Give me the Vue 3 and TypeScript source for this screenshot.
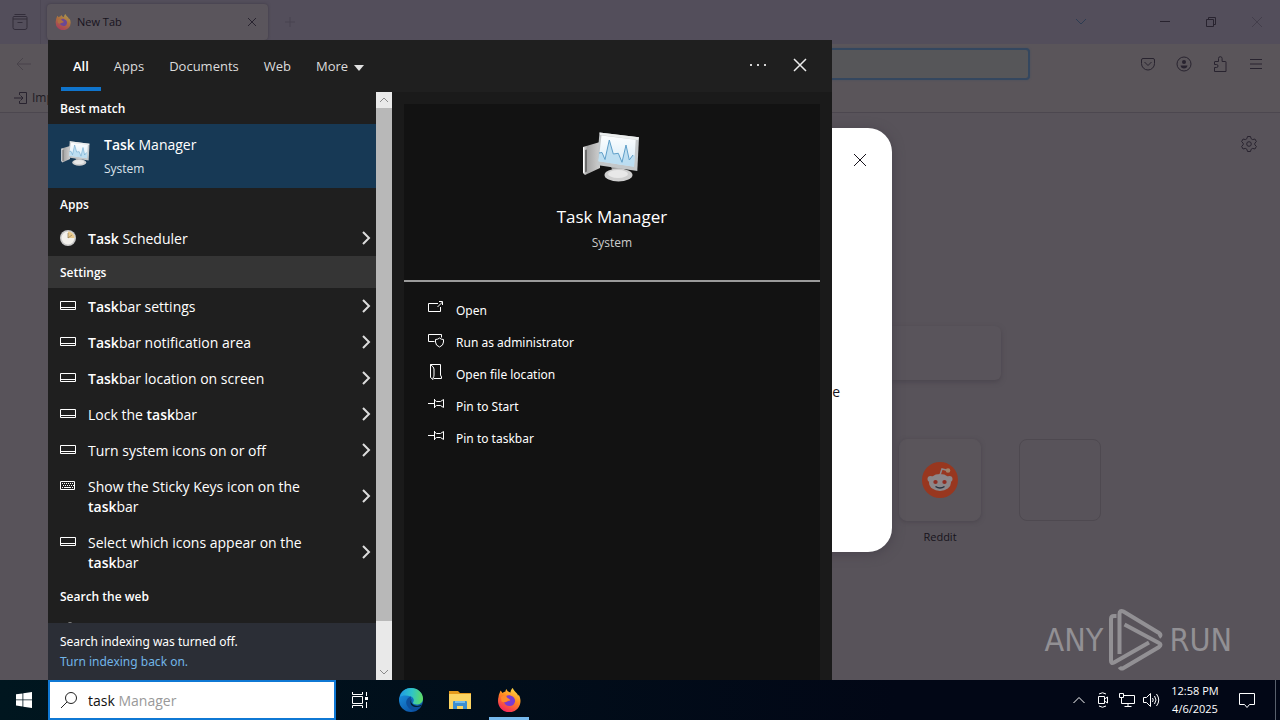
<script setup lang="ts">
import { ref } from 'vue'

interface Part { text: string; bold?: boolean }
interface Result { icon: 'bar' | 'keys'; parts: Part[] }
interface Action { icon: 'open' | 'admin' | 'folder' | 'pin'; label: string }

const query = ref('task')
const tabs: string[] = ['All', 'Apps', 'Documents', 'Web']

const settings: Result[] = [
  { icon: 'bar', parts: [{ text: 'Task', bold: true }, { text: 'bar settings' }] },
  { icon: 'bar', parts: [{ text: 'Task', bold: true }, { text: 'bar notification area' }] },
  { icon: 'bar', parts: [{ text: 'Task', bold: true }, { text: 'bar location on screen' }] },
  { icon: 'bar', parts: [{ text: 'Lock the ' }, { text: 'task', bold: true }, { text: 'bar' }] },
  { icon: 'bar', parts: [{ text: 'Turn system icons on or off' }] },
  { icon: 'keys', parts: [{ text: 'Show the Sticky Keys icon on the ' }, { text: 'task', bold: true }, { text: 'bar' }] },
  { icon: 'bar', parts: [{ text: 'Select which icons appear on the ' }, { text: 'task', bold: true }, { text: 'bar' }] },
]

const actions: Action[] = [
  { icon: 'open', label: 'Open' },
  { icon: 'admin', label: 'Run as administrator' },
  { icon: 'folder', label: 'Open file location' },
  { icon: 'pin', label: 'Pin to Start' },
  { icon: 'pin', label: 'Pin to taskbar' },
]
</script>

<template>
  <div class="desktop">
    <!-- Shared drawing -->
    <svg class="defs" aria-hidden="true">
      <defs>
        <linearGradient id="metal" x1="0" y1="0" x2="1" y2="0">
          <stop offset="0" stop-color="#e4e4e4" /><stop offset=".25" stop-color="#a5a5a5" /><stop offset="1" stop-color="#cfcfcf" />
        </linearGradient>
        <linearGradient id="glass" x1="0" y1="0" x2="0" y2="1">
          <stop offset="0" stop-color="#fdfeff" /><stop offset="1" stop-color="#d5eaf6" />
        </linearGradient>
        <linearGradient id="fox" x1=".8" y1="0" x2=".3" y2="1">
          <stop offset="0" stop-color="#ffe14a" /><stop offset=".45" stop-color="#ff8a1f" /><stop offset="1" stop-color="#f5225f" />
        </linearGradient>
        <linearGradient id="edgeTop" x1="0" y1=".4" x2="1" y2=".5">
          <stop offset="0" stop-color="#1f9be4" /><stop offset=".5" stop-color="#2fc4c8" /><stop offset="1" stop-color="#5fdc62" />
        </linearGradient>
        <linearGradient id="edgeLow" x1="0" y1="0" x2=".7" y2="1">
          <stop offset="0" stop-color="#1c9be8" /><stop offset="1" stop-color="#0b50a4" />
        </linearGradient>
        <symbol id="monitor" viewBox="0 0 64 64">
          <path d="M3 21 20 16v26L5 49l-2-2z" fill="url(#metal)" />
          <path d="M3 21l1.200 1v25l-1.200-1z" fill="#fff" />
          <path d="M5 24l2-.5v22l-2 1z" fill="#6c6c6c" />
          <path d="M30 38l14 2-1 6H33z" fill="#9b9b9b" />
          <ellipse cx="38.500" cy="49" rx="14" ry="6.500" fill="#cfcfcf" />
          <ellipse cx="38" cy="48" rx="10" ry="4" fill="#e8e8e8" />
          <path d="M19.500 6.500 59 11.300 57.300 45 16.700 39z" fill="#c3c7c9" />
          <path d="M19.500 6.500 59 11.300 58 14 20 9z" fill="#eceeee" />
          <path d="M21.500 9.500 55.700 13.700 54 40.700 18.500 35.300z" fill="url(#glass)" />
          <path d="M19 27l3-.5 3 7 4.300-19.500 4 14 5-.7 3.700 9 4-17.300 3.300 15 3.700-5 2 1-1 10.700-35.500-5.400z" fill="#b4d9ef" opacity=".8" />
          <path d="M19 27l3-.5 3 7 4.300-19.500 4 14 5-.7 3.700 9 4-17.300 3.300 15 3.700-5" fill="none" stroke="#5f9fc9" stroke-width="1" />
        </symbol>
        <symbol id="firefox" viewBox="0 0 24 24">
          <path d="M1.500 9C1.700 6 3 4.500 3.500 2.500 4.300 3.200 5 4 5.500 5 6.500 4 7.500 3.500 8.500 3.500 8.500 2.500 9 1.500 9.500 1c.5 2 2 3 4 3.500C13.500 2.500 14.500 1 15.800 0c.5 2 2 3 3.700 5 1 1 1.300 1.700 1.500 2.700.6-.4.800-1 .8-1 1 2 1.700 4 1.700 6.300a11.200 11.200 0 0 1-22.500 0c0-1.500.2-3 .5-4z" fill="url(#fox)" />
          <path d="M8 9c2-2 4-2 6-1.300 3 1 4.500 3.300 4 6a5.700 5.700 0 0 1-11 .3c1 .5 2.300.3 3.800-.8 1.200-.8 2.300-.2 2.500-1.200-.4-1.200-3.500-.8-5.300-3z" fill="#7a3bd0" />
          <path d="M4 9.500c1.500-2 4-2.500 5.500-1.500C9 9.500 12 10.500 12.500 11.500c-.8 1-2 .8-3 1.800-1.500 1-3 1.200-5 .2z" fill="#ff8a2a" />
        </symbol>
      </defs>
    </svg>

    <div class="browser">
      <header class="tabstrip">
        <button class="side" aria-label="Tab overview">
          <svg width="18" height="18" viewBox="0 0 18 18"><path d="M3.500 1.500h11M2 6h14M6.500 9.500h5M3 3.500h12q1 0 1 1v10q0 2-2 2H4q-2 0-2-2v-10q0-1 1-1z" /></svg>
        </button>
        <div class="tab">
          <svg class="fav" width="16" height="16"><use href="#firefox" /></svg>
          <span>New Tab</span>
          <button aria-label="Close tab"><svg width="10" height="10" viewBox="0 0 10 10"><path d="M1 1l8 8M9 1l-8 8" /></svg></button>
        </div>
        <button class="plus" aria-label="Open tab"><svg width="12" height="12" viewBox="0 0 12 12"><path d="M6 1v10M1 6h10" /></svg></button>
        <div class="grow"></div>
        <button class="list" aria-label="List tabs"><svg width="14" height="8" viewBox="0 0 14 8"><path d="M2 1l5 5 5-5" /></svg></button>
        <button class="win" aria-label="Minimize"><svg width="10" height="10" viewBox="0 0 10 10"><path d="M0 4.500h10" /></svg></button>
        <button class="win" aria-label="Restore"><svg width="12" height="12" viewBox="0 0 12 12"><path d="M1.500 3.500h7v7h-7zM3.500 3V1.500h7v7H9" /></svg></button>
        <button class="win faint" aria-label="Close"><svg width="10" height="10" viewBox="0 0 10 10"><path d="M0 0l10 10M10 0L0 10" /></svg></button>
      </header>
      <div class="nav">
        <button class="back" aria-label="Back"><svg width="16" height="14" viewBox="0 0 16 14"><path d="M7 1L1 7l6 6M1 7h14" /></svg></button>
        <input class="url" type="text" aria-label="Address" />
        <div class="tools">
          <button aria-label="Pocket"><svg width="16" height="16" viewBox="0 0 16 16"><path d="M3 2.500h10q1.500 0 1.500 1.500v3.500a6.500 6.500 0 0 1-13 0V4Q1.500 2.500 3 2.500zM4.500 6L8 9.500 11.500 6" /></svg></button>
          <button aria-label="Account"><svg width="16" height="16" viewBox="0 0 16 16"><circle cx="8" cy="8" r="7" /><circle class="solid" cx="8" cy="6" r="2" /><path class="solid" d="M4.500 9.500h7q-.5 3-3.500 3t-3.500-3z" /></svg></button>
          <button aria-label="Extensions"><svg width="16" height="16" viewBox="0 0 16 16"><path d="M2.500 15.500v-4h2q1.500 0 1.500-1.500t-1.500-1.500h-2V6q0-.5.500-.5h3.500V2.500a1.800 1.800 0 0 1 3.600 0v3h3.400q.5 0 .5.500v9.500z" /></svg></button>
          <button aria-label="Menu"><svg width="16" height="16" viewBox="0 0 16 16"><path d="M2 3.500h12M2 8h12M2 12.500h12" /></svg></button>
        </div>
      </div>
      <div class="bookmarks">
        <svg width="14" height="14" viewBox="0 0 14 14"><path d="M5.500 4V1.500h7v11h-7V10M0 7h9M6.500 4.500L9 7 6.500 9.500" /></svg>
        <a href="#">Imp</a>
      </div>
      <main class="page">
        <button class="gear" aria-label="Personalize">
          <svg width="18" height="18" viewBox="0 0 18 18"><path d="M7.500 1.500h3l.6 2.200 1.600.9 2.200-.6 1.500 2.600-1.600 1.600v1.600l1.600 1.600-1.500 2.600-2.200-.6-1.600.9-.6 2.200h-3l-.6-2.200-1.600-.9-2.200.6-1.500-2.600 1.600-1.600V8.200L1.600 6.600 3.100 4l2.200.6 1.600-.9z" /><circle cx="9" cy="9" r="2.300" /></svg>
        </button>
        <div class="searchbox"></div>
        <div class="tiles">
          <a class="tile" href="#">
            <span class="box raised">
              <svg width="36" height="36" viewBox="0 0 36 36">
                <circle cx="18" cy="18" r="18" fill="#98371f" />
                <path d="M18 13l2-6 6 1.500" fill="none" stroke="#8c8789" stroke-width="1.500" />
                <circle cx="26" cy="8.500" r="2.300" fill="#a0826a" /><circle cx="8.500" cy="17" r="3" fill="#8c8789" /><circle cx="27.500" cy="17" r="3" fill="#8c8789" />
                <ellipse cx="18" cy="20.500" rx="11" ry="8.500" fill="#8c8789" />
                <ellipse cx="13.500" cy="20" rx="2.200" ry="2" fill="#8d2d22" /><ellipse cx="22.500" cy="20" rx="2.200" ry="2" fill="#8d2d22" />
                <path d="M13.500 24.500q4.500 3 9 0" fill="none" stroke="#26303c" stroke-width="1.500" />
              </svg>
            </span>
            <span>Reddit</span>
          </a>
          <div class="tile"><span class="box"></span></div>
        </div>
      </main>
      <div class="modal">
        <button aria-label="Close dialog"><svg width="12" height="12" viewBox="0 0 12 12"><path d="M0 0l12 12M12 0L0 12" /></svg></button>
        <p>e</p>
      </div>
      <div class="mark">
        <span>ANY</span>
        <svg width="56" height="64" viewBox="0 0 56 64"><path d="M8.500 8H6q-3 0-3 3v42q0 3 3 1.500L41 34.500M11.500 46V6q0-4.500 4-2.500L51 25q3 2 0 4M16.500 16.500L51 35q3 1.500 0 4L15.500 60q-2.500 1.500-4-1" /></svg>
        <span>RUN</span>
      </div>
    </div>

    <section class="search">
      <nav class="top">
        <button v-for="t in tabs" :key="t" :class="{ on: t === 'All' }">{{ t }}</button>
        <button>More <i class="caret"></i></button>
        <span class="grow"></span>
        <button class="dots" aria-label="Options"><svg width="16" height="4" viewBox="0 0 16 4"><path d="M0 1h2v2H0zM7 1h2v2H7zM14 1h2v2h-2z" /></svg></button>
        <button class="shut" aria-label="Close search"><svg width="14" height="14" viewBox="0 0 14 14"><path d="M1 1l12 12M13 1L1 13" /></svg></button>
      </nav>
      <div class="body">
        <div class="left">
          <div class="results">
            <h2>Best match</h2>
            <button class="best">
              <svg width="32" height="32"><use href="#monitor" /></svg>
              <span><span class="name"><b>Task</b> Manager</span><small>System</small></span>
            </button>
            <h2>Apps</h2>
            <button class="row">
              <svg class="clock" width="16" height="16" viewBox="0 0 16 16"><circle cx="8" cy="8" r="8" fill="#c9c9c9" /><circle cx="8" cy="8" r="6.500" fill="#f3f1ec" /><path d="M8 8V1.500A6.500 6.500 0 0 1 14.500 8z" fill="#e9c98b" /><path d="M8 8l4-3M8 3v5" stroke="#8c7a58" stroke-width=".7" /></svg>
              <span class="label"><b>Task</b> Scheduler</span>
              <svg class="chev" width="9" height="14" viewBox="0 0 9 14"><path d="M1 1l6 6-6 6" /></svg>
            </button>
            <h2 class="lit">Settings</h2>
            <button v-for="(r, i) in settings" :key="i" class="row">
              <svg v-if="r.icon === 'bar'" class="line" width="16" height="16" viewBox="0 0 16 16"><path d="M.5 3.500h15v8H.5zM.5 9.500h15" /></svg>
              <svg v-else class="line" width="16" height="16" viewBox="0 0 16 16"><path d="M.5 3.500h14v8H.5z" /><path d="M2 5.500h11M3 7.500h11" stroke-dasharray="1 1" /><path d="M2 9.500h1M4 9.500h7M12 9.500h1" /></svg>
              <span class="label"><template v-for="(p, j) in r.parts" :key="j"><b v-if="p.bold">{{ p.text }}</b><template v-else>{{ p.text }}</template></template></span>
              <svg class="chev" width="9" height="14" viewBox="0 0 9 14"><path d="M1 1l6 6-6 6" /></svg>
            </button>
            <h2>Search the web</h2>
            <button class="row" aria-label="Search the web for task">
              <svg class="line" width="16" height="16" viewBox="0 0 16 16"><circle cx="10" cy="6" r="5" /><path d="M6.500 9.500L1 15" /></svg>
            </button>
          </div>
          <div class="notice">
            <span>Search indexing was turned off.</span>
            <a href="#">Turn indexing back on.</a>
          </div>
        </div>
        <div class="scroll">
          <svg width="16" height="16" viewBox="0 0 16 16"><path d="M4 10l4-4 4 4" /></svg>
          <div class="thumb"></div>
          <div class="track"></div>
          <svg width="16" height="16" viewBox="0 0 16 16"><path d="M4 6l4 4 4-4" /></svg>
        </div>
        <div class="detail">
          <div class="hero">
            <svg width="64" height="64"><use href="#monitor" /></svg>
            <h1>Task Manager</h1>
            <p>System</p>
          </div>
          <div class="actions">
            <button v-for="a in actions" :key="a.label">
              <svg width="16" height="16" viewBox="0 0 16 16">
                <path v-if="a.icon === 'open'" d="M10 3.500H.5v8h12V7M9.500 7l5-5M11 1.500h3.500V5" />
                <path v-else-if="a.icon === 'admin'" d="M6.500 9.500h-6v-7h13v3M7.500 7.500q2.500 0 4-1.500 1.500 1.500 4 1.500v2.500q0 3.500-4 5-4-1.500-4-5z" />
                <path v-else-if="a.icon === 'folder'" d="M2.500.5h10V11l1 2v1.500H6M2.500.5v13l2.500 2V14q1-1 1-3V5q0-2-3.500-4.500" />
                <path v-else d="M0 7.500h6.500M6.500 3v9M6.500 4l2 1.500h4l3-2v8l-3-2h-4L6.500 11" />
              </svg>
              {{ a.label }}
            </button>
          </div>
        </div>
      </div>
    </section>

    <footer class="taskbar">
      <button class="start" aria-label="Start"><svg width="16" height="16" viewBox="0 0 16 16"><path d="M0 2.300l6.500-.9v6.100H0zM7.300 1.300L16 0v7.500H7.300zM0 8.300h6.500v6.200L0 13.600zM7.300 8.300H16V16l-8.700-1.300z" fill="#fff" /></svg></button>
      <label class="field">
        <svg width="18" height="18" viewBox="0 0 18 18"><circle cx="11" cy="7" r="5.500" /><path d="M7 11l-6 6" /></svg>
        <span class="entry">
          <input v-model="query" type="text" aria-label="Type here to search" />
          <span class="ghost"><span>task</span> Manager</span>
        </span>
      </label>
      <button class="app view" aria-label="Task view"><svg class="line" width="18" height="18" viewBox="0 0 18 18"><path d="M1.500 1v2.500h10V1M1.500 5.500h10v7h-10zM1.500 17v-2.500h10V17M15.500 1v4M15.500 11v6" /><path d="M14 6h3v3h-3z" fill="#fff" stroke="none" /></svg></button>
      <button class="app" aria-label="Edge">
        <svg width="24" height="24" viewBox="0 0 24 24"><circle cx="12" cy="12" r="12" fill="url(#edgeLow)" /><path d="M1 9C2 3 7 0 12 0c7 0 12 5 12 10.500 0 4-3 6-6.500 6-2 0-4-.8-3.500-2 1.500-1.500 1-5-2-6C8 7 3 7 1 9z" fill="url(#edgeTop)" /><path d="M12 8.500c-4 1-6 5-4 9 1.500 3.500 5.500 5.500 9 5 2-1 4-2.500 5-4.500-3 1.500-7.500 1.500-9.500-1-1.500-1.500-1-4-.5-5z" fill="#0d4f9c" /><path d="M13.500 10.500c-1.500 1-1.800 3.500-.5 5 2.500 3 6.500 3 10 1l-.8 1.500c-3 1.500-7.200 1.500-9.400-.5-2-2-1.800-5.500.7-7z" fill="#02202f" /></svg>
      </button>
      <button class="app" aria-label="File Explorer">
        <svg width="24" height="24" viewBox="0 0 24 24"><path d="M1 3h9l2 2h11v5H1z" fill="#e59a1c" /><path d="M1 6h22v15H1z" fill="#fcd462" /><path d="M5 14q0-1 1-1h12q1 0 1 1v7h-4v-3H9v3H5z" fill="#3d8ed0" /><path d="M7 13h10v2H7z" fill="#77bdec" /></svg>
      </button>
      <button class="app active" aria-label="Firefox"><svg width="24" height="24"><use href="#firefox" /></svg></button>
      <span class="grow"></span>
      <div class="tray">
        <button aria-label="Hidden icons"><svg width="16" height="16" viewBox="0 0 16 16"><path d="M2.500 11L8 5.500l5.500 5.500" /></svg></button>
        <button aria-label="Meet now"><svg width="16" height="16" viewBox="0 0 16 16"><path d="M3.500 4.500h6v7h-6zM9.500 7l3-2v6l-3-2M4 2q3.500-2.500 7 0M4 14q3.500 2.500 7 0" /></svg></button>
        <button aria-label="Network"><svg width="18" height="16" viewBox="0 0 18 16"><path d="M6 3.500h10.500v8h-13V8M10 11.500V15M6.500 14.500h7M1.500 1.500h4v4h-4zM3.500 5.500v4" /></svg></button>
        <button aria-label="Volume"><svg width="18" height="16" viewBox="0 0 18 16"><path d="M1.500 5.500h3l4-4v13l-4-4h-3zM10.500 6q1.500 2 0 4M12.500 4q3 4 0 8M14.500 2q4.500 6 0 12" /></svg></button>
      </div>
      <div class="time"><span>12:58 PM</span><span>4/6/2025</span></div>
      <button class="notify" aria-label="Notifications"><svg width="18" height="18" viewBox="0 0 18 18"><path d="M1.500 2.500h15v11h-5l-2.500 3-2.500-3h-5z" /></svg></button>
      <button class="peek" aria-label="Show desktop"></button>
    </footer>
  </div>
</template>

<style>
body { background: #58535a; }
</style>

<style scoped>
* { box-sizing: border-box; }
.desktop {
  position: relative;
  display: flex;
  flex-direction: column;
  height: 100vh;
  overflow: hidden;
  font: 13px/16px "Open Sans", "Noto Sans", sans-serif;
  color: #fff;
}
.defs { position: absolute; width: 0; height: 0; }
button { margin: 0; padding: 0; border: 0; background: none; color: inherit; font: inherit; text-align: left; }
svg { display: block; flex: none; }
a { text-decoration: none; }
h1, h2, p { margin: 0; font-weight: 400; }
.grow { flex: 1; }

.browser { position: relative; flex: 1; min-height: 0; display: flex; flex-direction: column; background: #58535a; color: #17131c; font-size: 11px; }
.browser button svg, .bookmarks svg { fill: none; stroke: #28232f; stroke-width: 1; }
.tabstrip { display: flex; align-items: center; height: 44px; background: #534e5b; }
.side { display: flex; justify-content: center; align-items: center; width: 41px; height: 44px; margin-right: 6px; border-right: 1px solid #4c4753; opacity: .75; }
.tab { display: flex; align-items: center; gap: 6px; width: 221px; height: 36px; padding: 0 11px 0 8px; background: #5a555c; border-radius: 4px; box-shadow: 0 0 3px #3f3a45; }
.tab span { flex: 1; }
.fav { opacity: .5; }
.plus { margin-left: 16px; opacity: .25; }
.list { margin-right: 54px; }
.tabstrip .list svg { stroke: #2d3c52; }
.win { display: flex; justify-content: center; width: 46px; }
.browser .faint { opacity: .35; }
.nav { display: flex; align-items: center; justify-content: space-between; height: 40px; padding: 0 16px; background: #5a555a; }
.back { width: 234px; opacity: .35; }
.url { flex: 1; height: 32px; border: 2px solid #34475f; border-radius: 4px; background: #565659; box-shadow: 0 0 2px #46505f; }
.tools { display: flex; justify-content: flex-end; gap: 20px; width: 234px; }
.tools .solid { fill: #28232f; stroke: none; }
.bookmarks { display: flex; align-items: center; gap: 4px; height: 29px; padding: 0 14px; background: #5a555a; border-bottom: 1px solid #4c474f; }
.bookmarks a { color: #201c25; font-size: 12px; }
.page { flex: 1; display: flex; flex-direction: column; align-items: center; }
.gear { align-self: flex-end; margin: 22px 22px 0 0; }
.searchbox { width: 722px; max-width: 100%; height: 54px; margin-top: 173px; border-radius: 6px; background: #59545b; box-shadow: 0 2px 5px #4b464e; }
.tiles { display: flex; justify-content: flex-end; width: 960px; max-width: 100%; margin-top: 59px; }
.tile { display: flex; flex-direction: column; align-items: center; gap: 8px; width: 120px; color: #17131c; }
.box { display: flex; justify-content: center; align-items: center; width: 82px; height: 82px; border: 1px solid #4e4950; border-radius: 8px; }
.raised { border-color: #5a555b; background: #5a555b; box-shadow: 0 1px 4px #4b464e; }
.modal { position: absolute; top: 128px; right: 388px; left: 388px; height: 424px; padding: 26px; border-radius: 24px; background: #fff; box-shadow: 0 2px 12px #48434c; }
.modal button { display: block; margin-left: auto; }
.modal button svg { stroke: #17131c; }
.modal p { margin-top: 218px; padding-right: 26px; text-align: right; font-size: 14px; }
.mark { position: absolute; right: 48px; bottom: 8px; display: flex; align-items: center; gap: 5px; color: #929094; font: 32px/40px "DejaVu Sans Condensed", "Liberation Sans Narrow", "Liberation Sans", sans-serif; }
.mark svg { fill: none; stroke: #929094; stroke-width: 4; }

.search { position: absolute; top: 40px; bottom: 40px; left: 48px; display: flex; flex-direction: column; width: 784px; background: #1f1f1f; }
.top { display: flex; align-items: center; height: 52px; padding: 0 25px 0 13px; color: #dcdcdc; font-size: 13px; }
.top button { position: relative; height: 52px; padding: 0 12px; margin-right: 1px; }
.top .on { color: #fff; font-weight: 600; }
.top .on::after { content: ""; position: absolute; right: 0; bottom: 1px; left: 0; height: 4px; background: #0f74cc; }
.caret { display: inline-block; margin-left: 2px; border: 5px solid transparent; border-top: 6px solid #e0e0e0; border-bottom: 0; }
.top .dots, .top .shut { margin: 0 0 2px; padding: 0; height: 16px; display: flex; align-items: center; }
.dots svg { fill: #d4d4d4; }
.shut svg { fill: none; stroke: #ececec; stroke-width: 1.5; }
.top .shut { margin-left: 27px; }
.body { flex: 1; min-height: 0; display: flex; }
.left { display: flex; flex-direction: column; width: 328px; }
.results { flex: 1; min-height: 0; overflow: hidden; }
.results h2 { height: 32px; padding: 0 12px; font-size: 12px; font-weight: 600; line-height: 34px; }
.results .lit { background: #353535; }
.best { display: flex; align-items: center; gap: 12px; width: 100%; height: 64px; padding: 2px 12px 0; background: #173955; font-size: 14px; line-height: 20px; }
.best svg { margin-bottom: 6px; }
.name, .best small { display: block; }
.best small { margin-top: 4px; color: #dce3ea; font-size: 12px; }
b { font-weight: 600; }
.row { display: flex; width: 100%; min-height: 36px; padding: 9px 5px 7px 12px; font-size: 14px; line-height: 20px; }
.row > svg:first-child { margin-top: 1px; }
.label { flex: 1; padding: 0 30px 0 12px; }
.line { fill: none; stroke: #fff; }
.chev { align-self: center; margin-bottom: 2px; fill: none; stroke: #dcdcdc; stroke-width: 2; }
.notice { display: flex; flex-direction: column; height: 57px; padding: 9px 12px 0; background: #2b2e36; font-family: "Noto Sans", sans-serif; font-size: 12px; line-height: 20px; }
.notice a { color: #71b5e8; }
.scroll { display: flex; flex-direction: column; width: 16px; background: #e9e9e9; }
.scroll svg { fill: none; stroke: #8a8a8a; stroke-width: 1; }
.thumb { flex: 513; background: #b8b8b8; }
.track { flex: 43; }
.detail { flex: 1; display: flex; flex-direction: column; padding: 12px 12px 0; background: #1a1a1a; }
.hero { display: flex; flex-direction: column; align-items: center; height: 178px; padding-top: 22px; border-bottom: 2px solid #9a9a9a; background: #121212; }
.hero h1 { margin-top: 15px; font-size: 17px; line-height: 24px; }
.hero p { margin-top: 6px; color: #ccc; font-size: 12px; }
.actions { flex: 1; padding: 12px 24px; background: #121212; }
.actions button { display: flex; align-items: center; gap: 12px; width: 100%; height: 32px; padding-top: 2px; font-family: "Noto Sans", sans-serif; font-size: 12px; }
.actions svg { margin-bottom: 6px; fill: none; stroke: #fff; }

.taskbar { display: flex; align-items: stretch; height: 40px; background: linear-gradient(90deg, #00161f, #020716 70%); }
.taskbar button { display: flex; justify-content: center; align-items: center; }
.taskbar .start { width: 48px; }
.field { display: flex; align-items: center; gap: 10px; width: 288px; padding: 0 10px; border: 2px solid #0f78d4; background: #fff; }
.field svg { fill: none; stroke: #222; }
.entry { display: grid; flex: 1; padding-top: 2px; font-size: 14px; line-height: 20px; }
.entry > * { grid-area: 1 / 1; min-width: 0; }
.entry input { width: 100%; padding: 0; border: 0; outline: 0; background: none; color: #111; font: inherit; }
.ghost { color: #999; pointer-events: none; }
.ghost span { visibility: hidden; }
.app { width: 49px; }
.taskbar .view { width: 48px; margin-right: 2px; }
.taskbar .active { border-top: 3px solid transparent; border-bottom: 3px solid #76b9ed; width: 40px; margin-left: 5px; }
.tray { display: flex; align-items: center; }
.tray button { width: 24px; }
.tray svg, .notify svg { fill: none; stroke: #fff; }
.time { display: flex; flex-direction: column; justify-content: center; align-items: center; width: 64px; font-size: 11px; line-height: 18px; }
.notify { width: 40px; }
.peek { width: 5px; margin-left: 8px; border-left: 1px solid #59606c; }
</style>
